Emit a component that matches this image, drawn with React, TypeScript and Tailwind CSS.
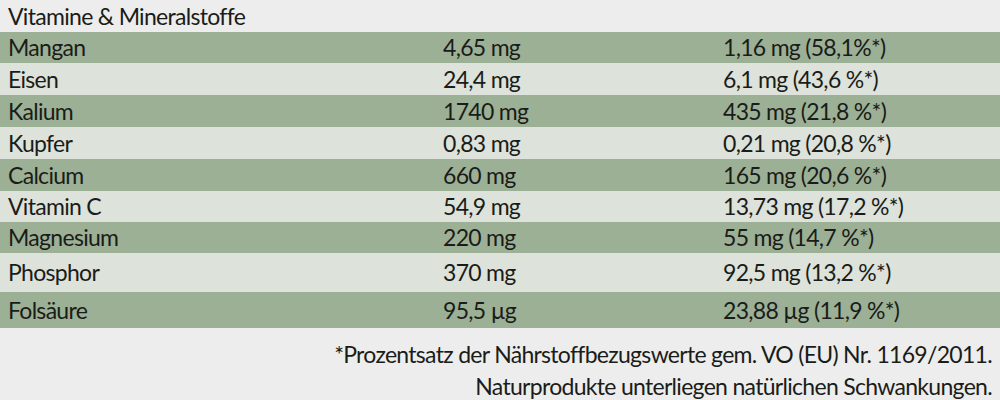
const rows: { name: string; amount: string; ref: string; h: string }[] = [
  { name: 'Mangan', amount: '4,65 mg', ref: '1,16 mg (58,1%*)', h: 'h-[31px]' },
  { name: 'Eisen', amount: '24,4 mg', ref: '6,1 mg (43,6 %*)', h: 'h-[32px]' },
  { name: 'Kalium', amount: '1740 mg', ref: '435 mg (21,8 %*)', h: 'h-[32px]' },
  { name: 'Kupfer', amount: '0,83 mg', ref: '0,21 mg (20,8 %*)', h: 'h-[32px]' },
  { name: 'Calcium', amount: '660 mg', ref: '165 mg (20,6 %*)', h: 'h-[32px]' },
  { name: 'Vitamin C', amount: '54,9 mg', ref: '13,73 mg (17,2 %*)', h: 'h-[31px]' },
  { name: 'Magnesium', amount: '220 mg', ref: '55 mg (14,7 %*)', h: 'h-[31px]' },
  { name: 'Phosphor', amount: '370 mg', ref: '92,5 mg (13,2 %*)', h: 'h-[39px]' },
  { name: 'Folsäure', amount: '95,5 µg', ref: '23,88 µg (11,9 %*)', h: 'h-[36px]' },
];

export default function App() {
  return (
    <div className="w-[1000px] h-[400px] overflow-hidden bg-[#ededed] text-[#1a1c19] font-['Lato','Liberation_Sans',sans-serif] text-[23px] leading-none tracking-[-0.7px]">
      <div className="h-[32px] flex items-center pl-2">Vitamine &amp; Mineralstoffe</div>
      {rows.map((r, i) => (
        <div
          key={r.name}
          className={`${r.h} grid grid-cols-[435px_280px_1fr] items-center pl-2 ${
            i % 2 === 0 ? 'bg-[#9cb095]' : 'bg-[#dde2da]'
          }`}
        >
          <span>{r.name}</span>
          <span>{r.amount}</span>
          <span>{r.ref}</span>
        </div>
      ))}
      <div className="flex flex-col items-end pr-2 pt-[15px] gap-[9px]">
        <p>*Prozentsatz der Nährstoffbezugswerte gem. VO (EU) Nr. 1169/2011.</p>
        <p>Naturprodukte unterliegen natürlichen Schwankungen.</p>
      </div>
    </div>
  );
}
